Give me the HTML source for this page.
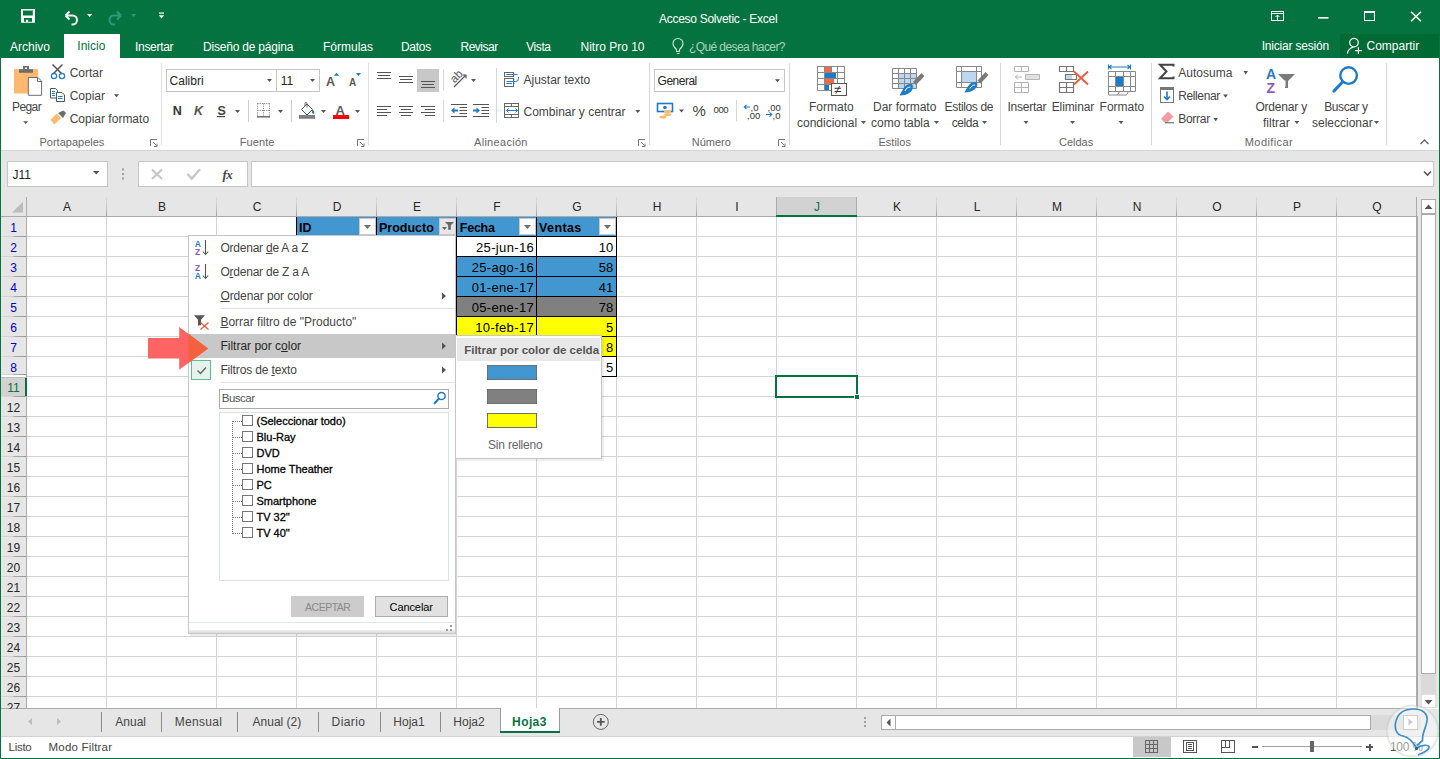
<!DOCTYPE html>
<html><head><meta charset="utf-8">
<style>
*{margin:0;padding:0;box-sizing:border-box}
html,body{width:1440px;height:759px;overflow:hidden;background:#fff}
body{position:relative;font-family:"Liberation Sans",sans-serif;font-size:12px;color:#444}
.a{position:absolute}
.t{position:absolute;white-space:pre;line-height:12px}
.w{color:#fff}
.g{color:#666}
.sep{position:absolute;width:1px;background:#DADADA}
.dd{position:absolute;width:0;height:0;border-left:3px solid transparent;border-right:3px solid transparent;border-top:3px solid #555}
svg{position:absolute;overflow:visible}
</style></head><body>
<!-- title bar -->
<div class="a" style="left:0;top:0;width:1440px;height:58px;background:#05733F"></div>
<!-- ribbon -->
<div class="a" style="left:1px;top:58px;width:1438px;height:93px;background:#fff;border-bottom:1px solid #D4D4D4"></div>
<!-- formula area -->
<div class="a" style="left:1px;top:151px;width:1438px;height:557px;background:#E6E6E6"></div>
<!-- window border -->
<div class="a" style="left:0;top:58px;width:1px;height:701px;background:#05733F"></div>
<div class="a" style="left:1439px;top:58px;width:1px;height:701px;background:#05733F"></div>
<div class="a" style="left:0;top:758px;width:1440px;height:1px;background:#05733F"></div>

<svg style="left:0;top:0" width="1440" height="58">
<path d="M21 9h14v13.7h-14z M23 10.4h9.8v5.2h-9.8z M24 18h8v3.8h-3.9v-2.1h-2.2v2.1h-1.9z" fill="#fff" fill-rule="evenodd"/>
<path d="M65.5 15.5l4-4M65.5 15.5l4 4M66 15.5h6.5a4.5 4.5 0 0 1 0 9h-1" fill="none" stroke="#F2F2F2" stroke-width="2"/>
<path d="M87 14h5.2l-2.6 3z" fill="#fff"/>
<path d="M121 15.5l-4-4M121 15.5l-4 4M120.5 15.5h-6.5a4.5 4.5 0 0 0 0 9h1" fill="none" stroke="#2A9C7E" stroke-width="2"/>
<path d="M131 14h5.2l-2.6 3z" fill="#2A9C7E"/>
<rect x="159" y="12.5" width="5" height="1.2" fill="#fff"/>
<path d="M158.8 15.2h5.4l-2.7 3.2z" fill="#fff"/>
<!-- window controls -->
<g fill="none" stroke="#fff" stroke-width="1">
<rect x="1271.5" y="11.5" width="12" height="9"/>
<path d="M1271.5 13.5h12"/>
<path d="M1277.5 20v-5M1275.5 17l2-2 2 2"/>
<rect x="1364.5" y="11.5" width="10" height="9"/>
</g>
<rect x="1364" y="11" width="11" height="2" fill="#fff"/>
<rect x="1318" y="17" width="10.5" height="1.6" fill="#fff"/>
<path d="M1411 11.8l10 9.5M1421 11.8l-10 9.5" stroke="#fff" stroke-width="1.5"/>
</svg>
<div class="t w" style="left:659px;top:12.8px;letter-spacing:-0.28px">Acceso Solvetic - Excel</div>
<!-- tabs -->
<div class="a" style="left:64px;top:34px;width:56px;height:24px;background:#fff"></div>
<div class="a" style="left:1340px;top:34px;width:99px;height:24px;background:#006A34"></div>
<div class="t w" style="left:10px;top:41px">Archivo</div>
<div class="t" style="left:77.3px;top:40.3px;color:#05733F">Inicio</div>
<div class="t w" style="left:135px;top:41px;letter-spacing:-0.3px">Insertar</div>
<div class="t w" style="left:203px;top:41px;letter-spacing:-0.2px">Diseño de página</div>
<div class="t w" style="left:323px;top:41px">Fórmulas</div>
<div class="t w" style="left:401px;top:41px;letter-spacing:-0.3px">Datos</div>
<div class="t w" style="left:460.5px;top:41px;letter-spacing:-0.5px">Revisar</div>
<div class="t w" style="left:526.2px;top:41px;letter-spacing:-0.4px">Vista</div>
<div class="t w" style="left:580.5px;top:41px">Nitro Pro 10</div>
<div class="t" style="left:689px;top:41px;color:#A9D3BC;letter-spacing:-0.6px">¿Qué desea hacer?</div>
<div class="t w" style="left:1261.7px;top:39.8px;letter-spacing:-0.2px">Iniciar sesión</div>
<div class="t w" style="left:1366.5px;top:39.8px">Compartir</div>
<svg style="left:0;top:30" width="1440" height="28">
<g fill="none" stroke="#CFE5D8" stroke-width="1.1">
<path d="M676.5 19.5c-2.5-2-3.5-3.5-3.5-6a5 5 0 0 1 10 0c0 2.5-1 4-3.5 6v2h-3z"/>
<path d="M677 23.5h2.5"/>
</g>
<g fill="none" stroke="#fff" stroke-width="1.2">
<circle cx="1354" cy="12.6" r="4.3"/>
<path d="M1347.3 23.5c.8-3.5 3-5.5 6-6.3"/>
<path d="M1355 20.6h6.8M1358.4 17.2v6.8"/>
</g>
</svg>
<!--TITLE-->
<!-- Portapapeles -->
<svg style="left:0;top:0" width="1440" height="150">
<rect x="14" y="69" width="24" height="24.6" rx="1.2" fill="#FCB96F"/>
<rect x="19" y="69.2" width="14" height="3.6" fill="#6D6D6D"/>
<rect x="23" y="66" width="6" height="4" fill="#6D6D6D"/>
<rect x="25" y="67.5" width="2" height="1.5" fill="#fff"/>
<path d="M28.3 77.5h9.7l3.6 3.6v14.2h-13.3z" fill="#fff" stroke="#6D6D6D" stroke-width="1"/>
<path d="M37.5 77.5v4h4" fill="none" stroke="#6D6D6D" stroke-width="1"/>
<path d="M23.2 121.3h5l-2.5 2.6z" fill="#555"/>
<!-- scissors -->
<path d="M52.5 64.5l9.5 9.5M62.5 64.5l-9.5 9.5" stroke="#555" stroke-width="1.5"/>
<circle cx="54" cy="76" r="2.6" fill="none" stroke="#1E7BC5" stroke-width="1.2"/>
<circle cx="62" cy="76" r="2.6" fill="none" stroke="#1E7BC5" stroke-width="1.2"/>
<!-- copy -->
<path d="M50.5 88.5h5l2 2v7.5h-7z" fill="#fff" stroke="#555"/>
<path d="M56.5 92.5h5.5l2.5 2.5v6.5h-8z" fill="#fff" stroke="#555"/>
<path d="M52 91.5h3M52 93.5h3M52 95.5h3M58 96.5h4.5M58 98.5h4.5" stroke="#1E7BC5" stroke-width="1"/>
<path d="M114 94.3h5l-2.5 3z" fill="#555"/>
<!-- format painter -->
<path d="M58 113l5.5-2.5 2.5 2.5-3 5z" fill="#6D6D6D"/>
<path d="M50.5 120l6-6.5 4.5 4.5-6.5 6.5z" fill="#FCB96F"/>
<path d="M161.5 63v82M368.5 63v82" stroke="#E1E1E1"/>
<!-- launchers -->
<g fill="none" stroke="#777" stroke-width="1">
<path d="M150.5 146v-6.5h6.5M153 142l3.5 3.5M154 146.5h3v-3"/>
<path d="M357.5 146v-6.5h6.5M360 142l3.5 3.5M361 146.5h3v-3"/>
<path d="M638.5 146v-6.5h6.5M641 142l3.5 3.5M642 146.5h3v-3"/>
<path d="M778.5 146v-6.5h6.5M781 142l3.5 3.5M782 146.5h3v-3"/>
</g>
</svg>
<div class="t" style="left:69.7px;top:66.8px">Cortar</div>
<div class="t" style="left:69.7px;top:89.8px">Copiar</div>
<div class="t" style="left:69.7px;top:112.8px">Copiar formato</div>
<div class="t" style="left:12px;top:100.5px;letter-spacing:-0.6px">Pegar</div>
<div class="t g" style="left:39.5px;top:136.2px;font-size:11px;letter-spacing:0px">Portapapeles</div>
<!-- Fuente -->
<div class="a" style="left:166px;top:69px;width:111px;height:23px;border:1px solid #C6C6C6"></div>
<div class="a" style="left:276px;top:69px;width:44px;height:23px;border:1px solid #C6C6C6"></div>
<div class="t" style="left:169.6px;top:74.8px;color:#262626">Calibri</div>
<div class="t" style="left:280.8px;top:74.8px;color:#262626">11</div>
<div class="t" style="left:172.7px;top:104.6px;font-weight:bold;font-size:12.5px;color:#333">N</div>
<div class="t" style="left:194px;top:104.6px;font-weight:bold;font-style:italic;font-size:12.5px;color:#555">K</div>
<div class="t" style="left:217.4px;top:104.6px;font-weight:bold;font-size:12.5px;color:#444">S</div>
<div class="t g" style="left:239.7px;top:136.2px;font-size:11px;letter-spacing:0.1px">Fuente</div>
<svg style="left:0;top:0" width="1440" height="150">
<rect x="217" y="116" width="8" height="1.2" fill="#444"/>
<path d="M267 79h5l-2.5 3z M310 79h5l-2.5 3z M235 110h5l-2.5 3z M278 110h5l-2.5 3z M321 110h5l-2.5 3z M355 110h5l-2.5 3z" fill="#555"/>
<path d="M248.5 100v22M291.5 100v22" stroke="#D0D0D0"/>
<!-- grow/shrink -->
<text x="326" y="85.8" font-family="Liberation Sans" font-weight="bold" font-size="12.5" fill="#5A5A5A">A</text>
<text x="349" y="85.8" font-family="Liberation Sans" font-weight="bold" font-size="10" fill="#5A5A5A">A</text>
<path d="M333.8 75.7l2.7-3 2.7 3z" fill="#1E7BC5"/>
<path d="M355.9 72.9h5.1l-2.55 3z" fill="#1E7BC5"/>
<!-- borders -->
<g fill="#666">
<path d="M257 103h13v1h-13zM257 117h13v1.2h-13z" opacity="0"/>
</g>
<path d="M257.5 103.5h12M257.5 110.5h12M257.5 103.5v13M263.5 103.5v13M269.5 103.5v13" stroke="#777" stroke-dasharray="1 1.2" fill="none"/>
<rect x="257" y="116.2" width="13" height="1.3" fill="#555"/>
<!-- fill -->
<path d="M307 104l5.5 5.5-5.5 5.5-5.5-5.5z" fill="#fff" stroke="#555"/>
<path d="M305 106v-2.5a1 1 0 0 1 2 0v4" fill="none" stroke="#555" stroke-width=".9"/>
<path d="M312 109.5c2 1 3 2.5 2 4.5l-2-1z" fill="#1E7BC5"/>
<rect x="299" y="115" width="16" height="3.8" fill="#808080"/>
<!-- font color -->
<text x="335.5" y="115" font-family="Liberation Sans" font-weight="bold" font-size="13" fill="#5A5A5A">A</text>
<rect x="333" y="115" width="16" height="4" fill="#F00"/>
</svg>
<!-- Alineacion -->
<svg style="left:0;top:0" width="1440" height="150">
<rect x="417" y="69" width="22" height="23" fill="#C8C8C8"/>
<g stroke="#555" stroke-width="1.1" fill="none">
<path d="M377 72.5h14M378 75.5h12M377 78.5h14"/>
<path d="M399 76.5h14M400 79.5h12M399 82.5h14"/>
<path d="M421 81.5h14M422 84.5h12M421 87.5h14"/>
<path d="M377 106.5h14M377 109.5h10M377 112.5h14M377 115.5h10"/>
<path d="M399 106.5h14M401 109.5h10M399 112.5h14M401 115.5h10"/>
<path d="M421 106.5h14M425 109.5h10M421 112.5h14M425 115.5h10"/>
<path d="M451 104.5h16M459.5 107.5h7.5M459.5 110.5h7.5M459.5 113.5h7.5M451 116.5h16"/>
<path d="M473 104.5h16M481.5 107.5h7.5M481.5 110.5h7.5M481.5 113.5h7.5M473 116.5h16"/>
<path d="M454 87l12-12M462.5 75h3.5v3.5"/>
</g>
<path d="M451 110.5l3.5-3v2h3.5v2h-3.5v2z" fill="#1E7BC5"/>
<path d="M480 110.5l-3.5-3v2h-3.5v2h3.5v2z" fill="#1E7BC5"/>
<text x="0" y="0" transform="translate(454.5 83.5) rotate(-45)" font-family="Liberation Sans" font-size="11.5" fill="#555">ab</text>
<path d="M471 79h5l-2.5 3z M635.3 110h5l-2.5 3z" fill="#555"/>
<path d="M443.5 69v22M443.5 100v22M496.5 68v55M649.5 63v82" stroke="#D8D8D8"/>
<!-- ajustar -->
<g fill="none" stroke="#666" stroke-width="1">
<rect x="504.5" y="72.5" width="9" height="4"/>
<rect x="504.5" y="78.5" width="9" height="8"/>
<rect x="504.5" y="103.5" width="14" height="14"/>
<path d="M504.5 106.5h14M504.5 114.5h14M511.5 103.5v3M511.5 114.5v3"/>
</g>
<g fill="none" stroke="#1E7BC5" stroke-width="1">
<path d="M506.5 74.5h11M506.5 81.5h5.5M506.5 83.5h5.5"/>
<path d="M518.5 77v1.5a3 3 0 0 1-3 3h-3M514.5 79.5l-2 2 2 2"/>
<path d="M506.5 110.5h11M508.5 108.5l-2 2 2 2M515.5 108.5l2 2-2 2"/>
</g>
</svg>
<div class="t" style="left:523.5px;top:74.4px">Ajustar texto</div>
<div class="t" style="left:523.5px;top:105.6px">Combinar y centrar</div>
<div class="t g" style="left:474px;top:136.2px;font-size:11px;letter-spacing:0.3px">Alineación</div>
<!-- Numero -->
<div class="a" style="left:654px;top:69px;width:131px;height:23px;border:1px solid #C6C6C6"></div>
<div class="t" style="left:657.6px;top:74.6px;color:#262626;letter-spacing:-0.5px">General</div>
<div class="t" style="left:692.5px;top:105px;font-size:15px;color:#444">%</div>
<div class="t" style="left:713.5px;top:103.6px;font-size:9.5px;letter-spacing:-0.4px;color:#333">000</div>
<div class="t g" style="left:691.7px;top:136.2px;font-size:11px;letter-spacing:0px">Número</div>
<svg style="left:0;top:0" width="1440" height="150">
<path d="M775 79.3h5l-2.5 3z M679 109.6h5l-2.5 3z" fill="#555"/>
<path d="M736.5 100v21.5M789.5 63v82" stroke="#D8D8D8"/>
<rect x="657.5" y="103.5" width="15" height="8" fill="#fff" stroke="#1E7BC5" stroke-width="1.6"/>
<circle cx="665" cy="107.5" r="1.8" fill="#1E7BC5"/>
<ellipse cx="667.5" cy="111.5" rx="3.5" ry="1.5" fill="#FCB96F"/>
<ellipse cx="667.5" cy="114.5" rx="3.5" ry="1.5" fill="#FCB96F"/>
<ellipse cx="663" cy="117" rx="3.5" ry="1.5" fill="#FCB96F"/>
<text x="750.5" y="111" font-family="Liberation Sans" font-size="9.5" fill="#333">,0</text>
<text x="747" y="118.5" font-family="Liberation Sans" font-size="9.5" fill="#333">,00</text>
<text x="767.5" y="111" font-family="Liberation Sans" font-size="9.5" fill="#333">,00</text>
<text x="772.5" y="118.5" font-family="Liberation Sans" font-size="9.5" fill="#333">,0</text>
<path d="M744 107h6M746.5 104.8l-2.3 2.2 2.3 2.2M766 114.5h6M769.5 112.3l2.3 2.2-2.3 2.2" fill="none" stroke="#1E7BC5" stroke-width="1.1"/>
<!-- Estilos icons -->
<g fill="none" stroke="#888" stroke-width="1">
<path d="M817.5 66.5h27v24h-27zM824.5 66.5v24M831.5 66.5v24M837.5 66.5v24M817.5 72.5h27M817.5 78.5h27M817.5 84.5h27"/>
</g>
<rect x="825" y="67" width="6" height="5" fill="#F26B43"/>
<rect x="825" y="73" width="11" height="5" fill="#1E7BC5"/>
<rect x="825" y="79" width="9" height="5" fill="#F26B43"/>
<rect x="825" y="85" width="4" height="5" fill="#1E7BC5"/>
<rect x="831.5" y="83.5" width="15" height="12" fill="#fff" stroke="#555"/>
<text x="834" y="94" font-family="Liberation Sans" font-size="13" fill="#333">≠</text>
<rect x="898" y="73" width="18" height="15" fill="#BDD7EE"/>
<g fill="none" stroke="#888" stroke-width="1">
<path d="M892.5 68.5h24v20h-24zM898.5 68.5v20M904.5 68.5v20M910.5 68.5v20M892.5 73.5h24M892.5 78.5h24M892.5 83.5h24"/>
</g>
<path d="M921.5 73l3 3-8.5 9-3-3z" fill="#7A7A7A"/>
<path d="M912.5 84.5c-3-1-6 0-8 2.5-2 2.5-3 5-5 8.5 4.5 0 8.5-1 11-3.5 2-2 3-4.5 2-7.5z" fill="#1E7BC5"/>
<path d="M905 91c1-2.5 3-4 5.5-4" fill="none" stroke="#fff" stroke-width="1"/>
<rect x="962" y="71" width="14" height="11" fill="#BDD7EE"/>
<g fill="none" stroke="#888" stroke-width="1">
<path d="M956.5 66.5h25v21h-25zM961.5 66.5v21M976.5 66.5v21M956.5 71.5h25M956.5 82.5h25"/>
</g>
<path d="M985.5 72l3 3-8 8.5-3-3z" fill="#7A7A7A"/>
<path d="M977 82.5c-3-1-6 0-8 2.5-2 2.5-3 4.5-4.5 7.5 4 0 8-1 10.5-3.5 2-2 3-4 2-6.5z" fill="#1E7BC5"/>
<path d="M970 88.5c1-2 3-3.5 5-3.5" fill="none" stroke="#fff" stroke-width="1"/>
<path d="M1000.5 63v82M1151.5 63v82M1386.5 63v82" stroke="#D8D8D8"/>
<path d="M861 121h5l-2.5 3z M934 121h5l-2.5 3z M982 121h5l-2.5 3z" fill="#555"/>
</svg>
<div class="t" style="left:809px;top:101px">Formato</div>
<div class="t" style="left:797px;top:117px">condicional</div>
<div class="t" style="left:873px;top:101px">Dar formato</div>
<div class="t" style="left:871px;top:117px">como tabla</div>
<div class="t" style="left:944.6px;top:101px;letter-spacing:-0.35px">Estilos de</div>
<div class="t" style="left:951.7px;top:117px;letter-spacing:-0.4px">celda</div>
<div class="t g" style="left:878.5px;top:136.2px;font-size:11px;letter-spacing:0px">Estilos</div>
<!-- Celdas -->
<svg style="left:0;top:0" width="1440" height="150">
<g fill="none" stroke="#B4B4B4" stroke-width="1">
<path d="M1014.5 66.5h14v5h-14zM1021.5 66.5v5M1014.5 82.5h14v10h-14zM1014.5 87.5h14M1021.5 82.5v10"/>
<path d="M1025.5 74.5h14v5h-14zM1032.5 74.5v5"/>
<path d="M1015 77h7M1018 74.5l-2.5 2.5 2.5 2.5"/>
</g>
<rect x="1026" y="75" width="13" height="4" fill="#E1E1E1"/>
<g fill="none" stroke="#777" stroke-width="1.2">
<path d="M1059.5 66.5h14v5h-14zM1066.5 66.5v5M1059.5 82.5h14v10h-14zM1059.5 87.5h14M1066.5 82.5v10"/>
<path d="M1065.5 74.5h11v5h-11z"/>
</g>
<rect x="1066" y="75" width="6" height="4" fill="#BDD7EE"/>
<path d="M1074 71.5l14 13M1088 71.5l-14 13" stroke="#F0573A" stroke-width="1.8"/>
<g fill="none" stroke="#888" stroke-width="1">
<path d="M1108.5 71.5h27v20h-27zM1115.5 71.5v20M1123.5 71.5v20M1130.5 71.5v20M1108.5 76.5h27M1108.5 86.5h27"/>
<path d="M1108.5 91.5v3.5h9l2-3.5M1117.5 95h9l2-3.5"/>
</g>
<rect x="1116" y="77" width="7" height="9" fill="#1E7BC5"/>
<path d="M1108.5 64.5v5M1130.5 64.5v5M1109 67h21M1111.5 64.8l-2.3 2.2 2.3 2.2M1127.5 64.8l2.3 2.2-2.3 2.2" fill="none" stroke="#1E7BC5" stroke-width="1.1"/>
<path d="M1023.5 121h5l-2.5 3z M1070 121h5l-2.5 3z M1118.5 121h5l-2.5 3z" fill="#555"/>
</svg>
<div class="t" style="left:1007.5px;top:101px;letter-spacing:-0.25px">Insertar</div>
<div class="t" style="left:1051.7px;top:101px;letter-spacing:-0.1px">Eliminar</div>
<div class="t" style="left:1099.6px;top:101px">Formato</div>
<div class="t g" style="left:1059px;top:136.2px;font-size:11px;letter-spacing:0px">Celdas</div>
<!-- Modificar -->
<svg style="left:0;top:0" width="1440" height="150">
<path d="M1173.5 66.5v-1.8h-13.5l6.5 6.8-6.5 6.8h13.5v-1.8" fill="none" stroke="#444" stroke-width="2"/>
<rect x="1160.5" y="87.5" width="13" height="15" fill="#fff" stroke="#777"/>
<rect x="1160" y="87" width="14" height="3" fill="#777"/>
<path d="M1167 91.5v8M1164 96.5l3 3 3-3" fill="none" stroke="#1E7BC5" stroke-width="1.6"/>
<path d="M1168 111.5l5.5 5-6 6h-3l-3.5-3.5z" fill="#F19CA4"/>
<path d="M1165 122.8h9" stroke="#555"/>
<path d="M1243.5 71h4.5l-2.25 3.5z M1223 94.4h5l-2.5 3.3z M1213.4 118h4.6l-2.3 3.3z M1294.4 121h5l-2.5 3z M1374 121h5l-2.5 3z" fill="#555"/>
<text x="1266" y="78.6" font-family="Liberation Sans" font-weight="bold" font-size="14" fill="#1E7BC5">A</text>
<text x="1266.5" y="92.5" font-family="Liberation Sans" font-weight="bold" font-size="14" fill="#8E5DB5">Z</text>
<path d="M1278 74h17l-7 7v7h-3v-7z" fill="#7A7A7A"/>
<path d="M1284 80.5v6.5h1.5v-6.5" fill="#fff"/>
<circle cx="1348.6" cy="75.6" r="8.3" fill="none" stroke="#1E7BC5" stroke-width="2.4"/>
<path d="M1342.5 82l-8.5 9" stroke="#1E7BC5" stroke-width="3.2" stroke-linecap="round"/>
<path d="M1420.5 144l4-4 4 4" fill="none" stroke="#666" stroke-width="1.4"/>
</svg>
<div class="t" style="left:1178.3px;top:67px">Autosuma</div>
<div class="t" style="left:1178.3px;top:90px;letter-spacing:-0.4px">Rellenar</div>
<div class="t" style="left:1178.3px;top:113px;letter-spacing:-0.3px">Borrar</div>
<div class="t" style="left:1255.4px;top:101.2px;letter-spacing:-0.2px">Ordenar y</div>
<div class="t" style="left:1263px;top:117.2px">filtrar</div>
<div class="t" style="left:1324.2px;top:101.2px;letter-spacing:-0.4px">Buscar y</div>
<div class="t" style="left:1312px;top:117.2px">seleccionar</div>
<div class="t g" style="left:1244.8px;top:136.2px;font-size:11px;letter-spacing:0.4px">Modificar</div>
<!--RIBBON-->
<div class="a" style="left:7px;top:161px;width:101px;height:26px;background:#fff;border:1px solid #C6C6C6"></div>
<div class="a" style="left:138px;top:161px;width:110px;height:26px;background:#fff;border:1px solid #C6C6C6"></div>
<div class="a" style="left:251px;top:161px;width:1183px;height:26px;background:#fff;border:1px solid #C6C6C6"></div>
<div class="t" style="left:12.5px;top:168.5px;color:#262626">J11</div>
<svg style="left:0;top:150" width="1440" height="50">
<path d="M93 21h6.5l-3.25 3.5z" fill="#555"/>
<rect x="122" y="18.5" width="2" height="2" fill="#A0A0A0"/>
<rect x="122" y="23" width="2" height="2" fill="#A0A0A0"/>
<rect x="122" y="27.5" width="2" height="2" fill="#A0A0A0"/>
<path d="M152 19.5l10 9.5M162 19.5l-10 9.5" stroke="#C4C4C4" stroke-width="1.9"/>
<path d="M187.5 24l4.2 4.6 8.3-9.4" fill="none" stroke="#C8C8C8" stroke-width="2.4"/>
<path d="M1424 21.5l3.5 3.5 3.5-3.5" fill="none" stroke="#555" stroke-width="1.6"/>
</svg>
<div class="t" style="left:222.5px;top:168.5px;font-family:'Liberation Serif';font-style:italic;font-weight:bold;font-size:13px;color:#444;letter-spacing:-0.5px">fx</div>
<!--FORMULA-->
<div class="a" style="left:776px;top:197px;width:81px;height:19px;background:#D2D2D2;border-left:1px solid #ABABAB;border-right:1px solid #ABABAB"></div>
<div class="a" style="left:776px;top:215px;width:81px;height:2px;background:#05733F"></div>
<div class="a" style="left:1px;top:378px;width:25px;height:18px;background:#D2D2D2"></div>
<div class="a" style="left:27px;top:217px;width:1389px;height:491px;background:#fff"></div>
<svg style="left:0;top:0" width="1440" height="759" shape-rendering="crispEdges">
<path d="M27 236.5H1416 M27 256.5H1416 M27 276.5H1416 M27 296.5H1416 M27 316.5H1416 M27 336.5H1416 M27 356.5H1416 M27 376.5H1416 M27 396.5H1416 M27 416.5H1416 M27 436.5H1416 M27 456.5H1416 M27 476.5H1416 M27 496.5H1416 M27 516.5H1416 M27 536.5H1416 M27 556.5H1416 M27 576.5H1416 M27 596.5H1416 M27 616.5H1416 M27 636.5H1416 M27 656.5H1416 M27 676.5H1416 M27 696.5H1416" stroke="#D4D4D4"/>
<path d="M106.5 217V708 M216.5 217V708 M296.5 217V708 M376.5 217V708 M456.5 217V708 M536.5 217V708 M616.5 217V708 M696.5 217V708 M776.5 217V708 M856.5 217V708 M936.5 217V708 M1016.5 217V708 M1096.5 217V708 M1176.5 217V708 M1256.5 217V708 M1336.5 217V708" stroke="#D4D4D4"/>
<defs><linearGradient id="cg" x1="0" x2="0" y1="0" y2="1"><stop offset="0" stop-color="#DADADA"/><stop offset="0.5" stop-color="#C8C8C8"/><stop offset="1" stop-color="#A0A0A0"/></linearGradient></defs><rect x="106" y="197" width="1" height="19" fill="url(#cg)"/><rect x="216" y="197" width="1" height="19" fill="url(#cg)"/><rect x="296" y="197" width="1" height="19" fill="url(#cg)"/><rect x="376" y="197" width="1" height="19" fill="url(#cg)"/><rect x="456" y="197" width="1" height="19" fill="url(#cg)"/><rect x="536" y="197" width="1" height="19" fill="url(#cg)"/><rect x="616" y="197" width="1" height="19" fill="url(#cg)"/><rect x="696" y="197" width="1" height="19" fill="url(#cg)"/><rect x="936" y="197" width="1" height="19" fill="url(#cg)"/><rect x="1016" y="197" width="1" height="19" fill="url(#cg)"/><rect x="1096" y="197" width="1" height="19" fill="url(#cg)"/><rect x="1176" y="197" width="1" height="19" fill="url(#cg)"/><rect x="1256" y="197" width="1" height="19" fill="url(#cg)"/><rect x="1336" y="197" width="1" height="19" fill="url(#cg)"/>
<path d="M1 216.5H1416" stroke="#ABABAB"/>
<path d="M26.5 197V708" stroke="#ABABAB"/>
<defs><linearGradient id="rg" x1="0" x2="1" y1="0" y2="0"><stop offset="0" stop-color="#D8D8D8"/><stop offset="0.45" stop-color="#D0D0D0"/><stop offset="0.55" stop-color="#A8A8A8"/><stop offset="1" stop-color="#9A9A9A"/></linearGradient></defs><rect x="1" y="236" width="25" height="1" fill="url(#rg)"/><rect x="1" y="256" width="25" height="1" fill="url(#rg)"/><rect x="1" y="276" width="25" height="1" fill="url(#rg)"/><rect x="1" y="296" width="25" height="1" fill="url(#rg)"/><rect x="1" y="316" width="25" height="1" fill="url(#rg)"/><rect x="1" y="336" width="25" height="1" fill="url(#rg)"/><rect x="1" y="356" width="25" height="1" fill="url(#rg)"/><rect x="1" y="396" width="25" height="1" fill="url(#rg)"/><rect x="1" y="416" width="25" height="1" fill="url(#rg)"/><rect x="1" y="436" width="25" height="1" fill="url(#rg)"/><rect x="1" y="456" width="25" height="1" fill="url(#rg)"/><rect x="1" y="476" width="25" height="1" fill="url(#rg)"/><rect x="1" y="496" width="25" height="1" fill="url(#rg)"/><rect x="1" y="516" width="25" height="1" fill="url(#rg)"/><rect x="1" y="536" width="25" height="1" fill="url(#rg)"/><rect x="1" y="556" width="25" height="1" fill="url(#rg)"/><rect x="1" y="576" width="25" height="1" fill="url(#rg)"/><rect x="1" y="596" width="25" height="1" fill="url(#rg)"/><rect x="1" y="616" width="25" height="1" fill="url(#rg)"/><rect x="1" y="636" width="25" height="1" fill="url(#rg)"/><rect x="1" y="656" width="25" height="1" fill="url(#rg)"/><rect x="1" y="676" width="25" height="1" fill="url(#rg)"/><rect x="1" y="696" width="25" height="1" fill="url(#rg)"/><rect x="1" y="374" width="25" height="1" fill="url(#rg)"/><rect x="1" y="375" width="25" height="2" fill="#fff"/><rect x="1" y="377" width="25" height="1" fill="#BDBDBD"/>
<path d="M1416.5 197V708M1417.5 216V708" stroke="#ABABAB"/>
<path d="M1 708.5H1418" stroke="#ABABAB"/>
<path d="M12 212.5h11v-11z" fill="#BDBDBD" shape-rendering="auto"/>
<rect x="25" y="378" width="2" height="18" fill="#05733F"/><rect x="776" y="215" width="81" height="2" fill="#05733F"/>
</svg>
<div class="t" style="left:27px;width:80px;text-align:center;top:200.84px;color:#262626">A</div>
<div class="t" style="left:107px;width:110px;text-align:center;top:200.84px;color:#262626">B</div>
<div class="t" style="left:217px;width:80px;text-align:center;top:200.84px;color:#262626">C</div>
<div class="t" style="left:297px;width:80px;text-align:center;top:200.84px;color:#262626">D</div>
<div class="t" style="left:377px;width:80px;text-align:center;top:200.84px;color:#262626">E</div>
<div class="t" style="left:457px;width:80px;text-align:center;top:200.84px;color:#262626">F</div>
<div class="t" style="left:537px;width:80px;text-align:center;top:200.84px;color:#262626">G</div>
<div class="t" style="left:617px;width:80px;text-align:center;top:200.84px;color:#262626">H</div>
<div class="t" style="left:697px;width:80px;text-align:center;top:200.84px;color:#262626">I</div>
<div class="t" style="left:777px;width:80px;text-align:center;top:200.84px;color:#05733F">J</div>
<div class="t" style="left:857px;width:80px;text-align:center;top:200.84px;color:#262626">K</div>
<div class="t" style="left:937px;width:80px;text-align:center;top:200.84px;color:#262626">L</div>
<div class="t" style="left:1017px;width:80px;text-align:center;top:200.84px;color:#262626">M</div>
<div class="t" style="left:1097px;width:80px;text-align:center;top:200.84px;color:#262626">N</div>
<div class="t" style="left:1177px;width:80px;text-align:center;top:200.84px;color:#262626">O</div>
<div class="t" style="left:1257px;width:80px;text-align:center;top:200.84px;color:#262626">P</div>
<div class="t" style="left:1337px;width:80px;text-align:center;top:200.84px;color:#262626">Q</div>
<div class="t" style="left:1px;width:25px;text-align:center;top:221.84px;color:#0000C0">1</div>
<div class="t" style="left:1px;width:25px;text-align:center;top:241.84px;color:#0000C0">2</div>
<div class="t" style="left:1px;width:25px;text-align:center;top:261.84px;color:#0000C0">3</div>
<div class="t" style="left:1px;width:25px;text-align:center;top:281.84px;color:#0000C0">4</div>
<div class="t" style="left:1px;width:25px;text-align:center;top:301.84px;color:#0000C0">5</div>
<div class="t" style="left:1px;width:25px;text-align:center;top:321.84px;color:#0000C0">6</div>
<div class="t" style="left:1px;width:25px;text-align:center;top:341.84px;color:#0000C0">7</div>
<div class="t" style="left:1px;width:25px;text-align:center;top:361.84px;color:#0000C0">8</div>
<div class="t" style="left:1px;width:25px;text-align:center;top:381.84px;color:#05733F">11</div>
<div class="t" style="left:1px;width:25px;text-align:center;top:401.84px;color:#262626">12</div>
<div class="t" style="left:1px;width:25px;text-align:center;top:421.84px;color:#262626">13</div>
<div class="t" style="left:1px;width:25px;text-align:center;top:441.84px;color:#262626">14</div>
<div class="t" style="left:1px;width:25px;text-align:center;top:461.84px;color:#262626">15</div>
<div class="t" style="left:1px;width:25px;text-align:center;top:481.84px;color:#262626">16</div>
<div class="t" style="left:1px;width:25px;text-align:center;top:501.84px;color:#262626">17</div>
<div class="t" style="left:1px;width:25px;text-align:center;top:521.84px;color:#262626">18</div>
<div class="t" style="left:1px;width:25px;text-align:center;top:541.84px;color:#262626">19</div>
<div class="t" style="left:1px;width:25px;text-align:center;top:561.84px;color:#262626">20</div>
<div class="t" style="left:1px;width:25px;text-align:center;top:581.84px;color:#262626">21</div>
<div class="t" style="left:1px;width:25px;text-align:center;top:601.84px;color:#262626">22</div>
<div class="t" style="left:1px;width:25px;text-align:center;top:621.84px;color:#262626">23</div>
<div class="t" style="left:1px;width:25px;text-align:center;top:641.84px;color:#262626">24</div>
<div class="t" style="left:1px;width:25px;text-align:center;top:661.84px;color:#262626">25</div>
<div class="t" style="left:1px;width:25px;text-align:center;top:681.84px;color:#262626">26</div>
<div class="t" style="left:1px;width:25px;text-align:center;top:701.84px;color:#262626">27</div>
<div class="a" style="left:775px;top:375px;width:83px;height:23px;border:2px solid #05733F"></div>
<div class="a" style="left:854px;top:394px;width:6px;height:6px;background:#05733F;border:1px solid #fff"></div>
<div class="a" style="left:1421px;top:214px;width:15px;height:480px;background:#DADADA"></div>
<div class="a" style="left:1421px;top:199px;width:15px;height:15px;background:#fff;border:1px solid #ABABAB"></div>
<div class="a" style="left:1421px;top:214px;width:15px;height:460px;background:#fff;border:1px solid #ABABAB"></div>
<div class="a" style="left:1421px;top:694px;width:15px;height:14px;background:#fff;border:1px solid #E0E0E0"></div>
<svg style="left:0;top:0" width="1440" height="759"><path d="M1424.5 209h8l-4-4.5z M1424.5 700h8l-4 4.5z" fill="#555"/></svg>
<!--GRID-->
<div class="a" style="left:297px;top:217px;width:319px;height:19px;background:#4397D0"></div>
<div class="a" style="left:456px;top:237px;width:160px;height:19px;background:#fff"></div>
<div class="a" style="left:456px;top:257px;width:160px;height:19px;background:#4397D0"></div>
<div class="a" style="left:456px;top:277px;width:160px;height:19px;background:#4397D0"></div>
<div class="a" style="left:456px;top:297px;width:160px;height:19px;background:#808080"></div>
<div class="a" style="left:456px;top:317px;width:160px;height:19px;background:#FFFF00"></div>
<div class="a" style="left:456px;top:337px;width:160px;height:19px;background:#FFFF00"></div>
<div class="a" style="left:456px;top:357px;width:160px;height:19px;background:#fff"></div>
<svg style="left:0;top:0" width="1440" height="759" shape-rendering="crispEdges">
<path d="M296.5 217V237 M376.5 217V237 M456.5 217V377 M536.5 217V377 M616.5 217V377 M296 236.5H617 M456 256.5H617 M456 276.5H617 M456 296.5H617 M456 316.5H617 M456 336.5H617 M456 356.5H617 M456 376.5H617" stroke="#000"/>
<rect x="359.5" y="218.5" width="16" height="16" fill="#fff" stroke="#C8C8C8"/>
<path d="M364 225h7l-3.5 4z" fill="#6D6D6D" shape-rendering="auto"/>
<rect x="519.5" y="218.5" width="16" height="16" fill="#fff" stroke="#C8C8C8"/>
<path d="M524 225h7l-3.5 4z" fill="#6D6D6D" shape-rendering="auto"/>
<rect x="599.5" y="218.5" width="16" height="16" fill="#fff" stroke="#C8C8C8"/>
<path d="M604 225h7l-3.5 4z" fill="#6D6D6D" shape-rendering="auto"/>
<rect x="439.5" y="218.5" width="16" height="16" fill="#E6E6E6" stroke="#C8C8C8"/>
<path d="M442 227h5l-2.5 3z" fill="#666" shape-rendering="auto"/>
<path d="M445 222h9l-3.2 3.2v4.6h-2.6v-4.6z" fill="#666" shape-rendering="auto"/>
</svg>
<div class="t" style="left:299px;top:222.1px;font-size:12.5px;font-weight:bold;color:#000">ID</div>
<div class="t" style="left:379px;top:222.1px;font-size:12.5px;font-weight:bold;color:#000">Producto</div>
<div class="t" style="left:459.8px;top:222.1px;font-size:12.5px;font-weight:bold;color:#000;letter-spacing:-0.25px">Fecha</div>
<div class="t" style="left:539px;top:222.1px;font-size:12.5px;font-weight:bold;color:#000;letter-spacing:0.4px">Ventas</div>
<div class="t" style="left:456px;width:78.05px;text-align:right;top:242.27px;font-size:13px;color:#000;letter-spacing:0.35px">25-jun-16</div>
<div class="t" style="left:536px;width:77.30px;text-align:right;top:242.27px;font-size:13px;color:#000">10</div>
<div class="t" style="left:456px;width:78.05px;text-align:right;top:262.27px;font-size:13px;color:#000;letter-spacing:0.35px">25-ago-16</div>
<div class="t" style="left:536px;width:77.30px;text-align:right;top:262.27px;font-size:13px;color:#000">58</div>
<div class="t" style="left:456px;width:78.05px;text-align:right;top:282.27px;font-size:13px;color:#000;letter-spacing:0.35px">01-ene-17</div>
<div class="t" style="left:536px;width:77.30px;text-align:right;top:282.27px;font-size:13px;color:#000">41</div>
<div class="t" style="left:456px;width:78.05px;text-align:right;top:302.27px;font-size:13px;color:#000;letter-spacing:0.35px">05-ene-17</div>
<div class="t" style="left:536px;width:77.30px;text-align:right;top:302.27px;font-size:13px;color:#000">78</div>
<div class="t" style="left:456px;width:78.05px;text-align:right;top:322.27px;font-size:13px;color:#000;letter-spacing:0.35px">10-feb-17</div>
<div class="t" style="left:536px;width:77.30px;text-align:right;top:322.27px;font-size:13px;color:#000">5</div>
<div class="t" style="left:456px;width:78.05px;text-align:right;top:342.27px;font-size:13px;color:#000;letter-spacing:0.35px">12-mar-17</div>
<div class="t" style="left:536px;width:77.30px;text-align:right;top:342.27px;font-size:13px;color:#000">8</div>
<div class="t" style="left:456px;width:78.05px;text-align:right;top:362.27px;font-size:13px;color:#000;letter-spacing:0.35px">15-mar-17</div>
<div class="t" style="left:536px;width:77.30px;text-align:right;top:362.27px;font-size:13px;color:#000">5</div>
<!--TABLE-->
<div class="a" style="left:1px;top:709px;width:1438px;height:27px;background:#E6E6E6"></div>
<div class="a" style="left:1px;top:736px;width:1438px;height:1px;background:#D2D2D2"></div>
<div class="a" style="left:500px;top:708px;width:60px;height:25px;background:#fff;border-left:1px solid #9B9B9B;border-right:1px solid #9B9B9B"></div>
<div class="a" style="left:500px;top:731px;width:60px;height:2px;background:#05733F"></div>
<svg style="left:0;top:0" width="1440" height="759">
<path d="M32 718v7l-4-3.5z M57 718v7l4-3.5z" fill="#BDBDBD"/>
<path d="M101.5 712v20M161.5 712v20M237.5 712v20M318.5 712v20M380.5 712v20M440.5 712v20" stroke="#8A8A8A" shape-rendering="crispEdges"/>
<circle cx="600.8" cy="721.9" r="7.5" fill="none" stroke="#666" stroke-width="1"/>
<path d="M597 721.9h7.6M600.8 718.1v7.6" stroke="#555" stroke-width="1.8"/>
<!-- h scrollbar -->
<rect x="864" y="717" width="2" height="2" fill="#A0A0A0"/>
<rect x="864" y="721" width="2" height="2" fill="#A0A0A0"/>
<rect x="864" y="725" width="2" height="2" fill="#A0A0A0"/>
</svg>
<div class="t" style="left:115.3px;top:715.5px">Anual</div>
<div class="t" style="left:174.7px;top:715.5px;letter-spacing:0.3px">Mensual</div>
<div class="t" style="left:252.6px;top:715.5px">Anual (2)</div>
<div class="t" style="left:331.6px;top:715.5px;letter-spacing:0.4px">Diario</div>
<div class="t" style="left:393.3px;top:715.5px">Hoja1</div>
<div class="t" style="left:453.3px;top:715.5px">Hoja2</div>
<div class="t" style="left:512.1px;top:715.5px;font-weight:bold;color:#05733F;letter-spacing:0.4px">Hoja3</div>
<div class="a" style="left:881px;top:715px;width:490px;height:15px;background:#fff;border:1px solid #ABABAB"></div>
<div class="a" style="left:895px;top:715px;width:1px;height:15px;background:#ABABAB"></div>
<div class="a" style="left:1371px;top:715px;width:50px;height:15px;background:#DADADA"></div>
<svg style="left:0;top:0" width="1440" height="759"><path d="M890.5 718.5v8l-4-4z" fill="#555"/></svg>
<!--TABS-->
<div class="t" style="left:8.6px;top:741px;font-size:11.5px;letter-spacing:-0.3px">Listo</div>
<div class="t" style="left:48.5px;top:741px;font-size:11.5px;letter-spacing:0.2px">Modo Filtrar</div>
<div class="a" style="left:1133px;top:737px;width:38px;height:20px;background:#C8C8C8"></div>
<svg style="left:0;top:0" width="1440" height="759" shape-rendering="crispEdges">
<path d="M1145.5 740.5h12v12h-12zM1149.5 740.5v12M1153.5 740.5v12M1145.5 744.5h12M1145.5 748.5h12" fill="none" stroke="#666"/>
<path d="M1183.5 740.5h13v12h-13zM1186.5 742.5h7v8h-7z" fill="none" stroke="#555"/>
<path d="M1188 744.5h4M1188 746.5h4M1188 748.5h4" stroke="#555"/>
<path d="M1221.5 740.5h13v12h-13zM1225.5 740.5v7M1229.5 740.5v7M1221.5 747.5h8" fill="none" stroke="#555"/>
<path d="M1252 746h6v2h-6z M1366 746h7v2h-7z M1368.5 743.5h2v7h-2z" fill="#555"/>
<path d="M1262 746.5h100" stroke="#A0A0A0"/>
<rect x="1310" y="741" width="4" height="11" fill="#666"/>
</svg>
<div class="t" style="left:1390px;top:740.6px;color:#555;letter-spacing:-0.3px">100 %</div>
<!-- watermark -->
<div class="a" style="left:1403px;top:715px;width:15px;height:15px;background:#fff;border:1px solid #ABABAB"></div>
<svg style="left:0;top:0" width="1440" height="759">
<path d="M1408.5 718.5v7l4-3.5z" fill="#A0A0A0"/>
<circle cx="1412.6" cy="731" r="25.6" fill="rgba(255,255,255,0.42)"/>
<circle cx="1412.6" cy="731" r="25.6" fill="none" stroke="rgba(190,190,190,0.35)" stroke-width="2"/>
<path d="M1416.5 748C1413 742 1409 737 1403 736C1396 735 1394 728 1396 721C1398 713 1405 709 1414 709C1423 709 1428 714 1427 721C1426 728 1422 733 1422.5 740.5L1417 745.5" fill="none" stroke="#3B8FCB" stroke-width="1.7"/>
<path d="M1417 748C1421 745 1428 744.5 1429 746.5C1430 750 1423 753 1418 755" fill="none" stroke="#3B8FCB" stroke-width="1.7"/>
<circle cx="1416.5" cy="748.5" r="1.6" fill="#1F5C9E"/>
</svg>
<!--STATUS-->
<!-- filter menu -->
<div class="a" style="left:190px;top:634px;width:266px;height:2px;background:rgba(0,0,0,0.08)"></div>
<div class="a" style="left:188px;top:235px;width:268px;height:399px;background:#fff;border:1px solid #C6C6C6"></div>
<div class="a" style="left:189px;top:334px;width:266px;height:24px;background:#C8C8C8"></div>
<svg style="left:0;top:0" width="1440" height="759">
<path d="M221 308.5H455M221 382.5H455" stroke="#E1E1E1" shape-rendering="crispEdges"/>
<text x="194.8" y="247" font-family="Liberation Sans" font-weight="bold" font-size="8.5" fill="#1E7BC5">A</text>
<text x="195" y="255" font-family="Liberation Sans" font-weight="bold" font-size="8.5" fill="#8E5DB5">Z</text>
<text x="195" y="271" font-family="Liberation Sans" font-weight="bold" font-size="8.5" fill="#8E5DB5">Z</text>
<text x="194.8" y="279" font-family="Liberation Sans" font-weight="bold" font-size="8.5" fill="#1E7BC5">A</text>
<path d="M205.5 240v14M202.8 251.5l2.7 3 2.7-3M205.5 264v14M202.8 275.5l2.7 3 2.7-3" fill="none" stroke="#555" stroke-width="1.1"/>
<path d="M194 315.3h11l-4 4.5v5.5h-3v-5.5z" fill="#555"/>
<path d="M198.5 320.5v5" stroke="#555" stroke-width="1"/>
<path d="M200.5 322.5l8 7M208.5 322.5l-8 7" stroke="#F0573A" stroke-width="1.2"/>
<rect x="191.5" y="360.5" width="19" height="19" fill="#E6F2EC" stroke="#5DBB91"/>
<path d="M197.5 370.5l3 3 5.5-6" fill="none" stroke="#666" stroke-width="1.4"/>
<path d="M442 292.5v7l4-3.5z M442 342.5v7l4-3.5z M442 366.5v7l4-3.5z" fill="#555"/>
<!-- red arrow -->
<path d="M148 338h31.2v-10.9l28.9 21.3-28.9 21.4v-11.2h-31.2z" fill="#FF6464"/>
<path d="M188.3 333.7l19.8 14.7-19.8 14.6z" fill="#F5603F"/>
</svg>
<div class="t" style="left:220.4px;top:241.8px;letter-spacing:-0.22px">Ordenar <u>d</u>e A a Z</div>
<div class="t" style="left:220.4px;top:265.8px;letter-spacing:-0.22px">O<u>r</u>denar de Z a A</div>
<div class="t" style="left:220.4px;top:289.8px;letter-spacing:-0.1px"><u>O</u>rdenar por color</div>
<div class="t" style="left:220.4px;top:315.8px"><u>B</u>orrar filtro de "Producto"</div>
<div class="t" style="left:220.4px;top:339.8px;color:#262626">Filtrar por c<u>o</u>lor</div>
<div class="t" style="left:220.4px;top:363.8px;letter-spacing:-0.15px">Filtros de <u>t</u>exto</div>
<!-- search -->
<div class="a" style="left:219px;top:389px;width:230px;height:20px;border:1px solid #ABABAB;background:#fff"></div>
<div class="t" style="left:221.8px;top:392px;color:#555;font-size:11.5px;letter-spacing:-0.5px">Buscar</div>
<svg style="left:0;top:0" width="1440" height="759">
<circle cx="441.5" cy="396" r="3.6" fill="none" stroke="#1E7BC5" stroke-width="1.5"/>
<path d="M438.8 398.8l-4.2 4.4" stroke="#1E7BC5" stroke-width="2" stroke-linecap="round"/>
</svg>
<!-- list -->
<div class="a" style="left:219px;top:412px;width:230px;height:169px;border:1px solid #D9E0E6;background:#fff"></div>
<svg style="left:0;top:0" width="1440" height="759" shape-rendering="crispEdges">
<path d="M232.5 421V534M233 421.5H242M233 437.5H242M233 453.5H242M233 469.5H242M233 485.5H242M233 501.5H242M233 517.5H242M233 533.5H242" stroke="#777" stroke-dasharray="1 1"/>
<path d="M242.5 415.5h10v10h-10zM242.5 431.5h10v10h-10zM242.5 447.5h10v10h-10zM242.5 463.5h10v10h-10zM242.5 479.5h10v10h-10zM242.5 495.5h10v10h-10zM242.5 511.5h10v10h-10zM242.5 527.5h10v10h-10z" fill="#fff" stroke="#777"/>
</svg>
<div class="t" style="left:256.5px;top:414.86px;color:#000;font-size:11px;-webkit-text-stroke:0.3px #000">(Seleccionar todo)</div>
<div class="t" style="left:256.5px;top:430.86px;color:#000;font-size:11px;-webkit-text-stroke:0.3px #000">Blu-Ray</div>
<div class="t" style="left:256.5px;top:446.86px;color:#000;font-size:11px;-webkit-text-stroke:0.3px #000">DVD</div>
<div class="t" style="left:256.5px;top:462.86px;color:#000;font-size:11px;-webkit-text-stroke:0.3px #000">Home Theather</div>
<div class="t" style="left:256.5px;top:478.86px;color:#000;font-size:11px;-webkit-text-stroke:0.3px #000">PC</div>
<div class="t" style="left:256.5px;top:494.86px;color:#000;font-size:11px;-webkit-text-stroke:0.3px #000">Smartphone</div>
<div class="t" style="left:256.5px;top:510.86px;color:#000;font-size:11px;-webkit-text-stroke:0.3px #000">TV 32"</div>
<div class="t" style="left:256.5px;top:526.86px;color:#000;font-size:11px;-webkit-text-stroke:0.3px #000">TV 40"</div>
<!-- buttons -->
<div class="a" style="left:291px;top:596px;width:73px;height:21px;background:#CCCCCC"></div>
<div class="a" style="left:375px;top:596px;width:73px;height:21px;background:#E1E1E1;border:1px solid #ADADAD"></div>
<div class="t" style="left:305.1px;top:601.4px;font-size:10.5px;letter-spacing:-0.5px;color:#8A8A8A">ACEPTAR</div>
<div class="t" style="left:389.6px;top:601.2px;font-size:11px;letter-spacing:-0.1px;color:#000">Cancelar</div>
<div class="a" style="left:189px;top:622px;width:266px;height:1px;background:#DCE6EE"></div>
<div class="a" style="left:189px;top:630px;width:266px;height:3px;background:linear-gradient(#F0F0F0,#DCDCDC)"></div>
<svg style="left:0;top:0" width="1440" height="759" shape-rendering="crispEdges">
<rect x="450" y="625" width="2" height="2" fill="#999"/>
<rect x="446" y="629" width="2" height="2" fill="#999"/>
<rect x="450" y="629" width="2" height="2" fill="#999"/>
</svg>
<!-- submenu -->
<div class="a" style="left:457px;top:337px;width:147px;height:124px;background:rgba(0,0,0,0.07)"></div>
<div class="a" style="left:455px;top:335px;width:147px;height:124px;background:#fff;border:1px solid #C6C6C6"></div>
<div class="a" style="left:457px;top:338px;width:143px;height:23px;background:#E8E8E8"></div>
<div class="t" style="left:464.2px;top:343.8px;font-weight:bold;font-size:11.5px;color:#555">Filtrar por color de celda</div>
<div class="a" style="left:487px;top:365px;width:50px;height:15px;background:#4397D0;border:1px solid #6E6E6E"></div>
<div class="a" style="left:487px;top:389px;width:50px;height:15px;background:#808080;border:1px solid #6E6E6E"></div>
<div class="a" style="left:487px;top:413px;width:50px;height:15px;background:#FFFF00;border:1px solid #6E6E6E"></div>
<div class="t" style="left:488px;top:439px;color:#666;letter-spacing:-0.2px">Sin relleno</div>
<!--MENU-->
</body></html>
